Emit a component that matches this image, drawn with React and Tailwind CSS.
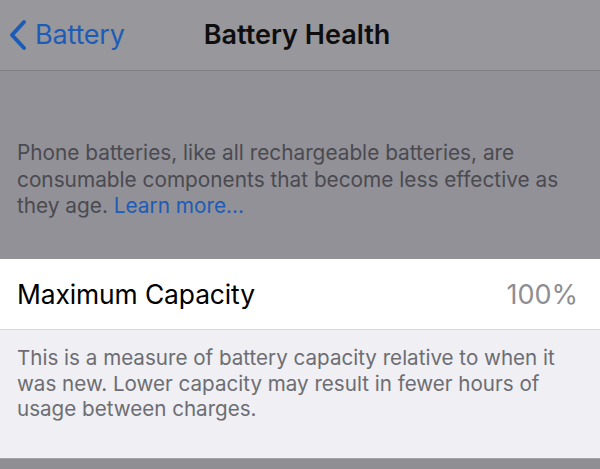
export default function App() {
  return (
    <div className="w-[600px] h-[469px] overflow-hidden flex flex-col bg-[#8e8e93]" style={{ fontFamily: 'Inter, "Noto Sans", sans-serif' }}>
      <div className="h-[71px] shrink-0 flex items-center relative bg-[#98979c] border-b border-[#807f84]">
        <div className="flex items-center pl-[8px] text-[#1d5cb6]">
          <svg width="20" height="32" viewBox="0 0 20 32" fill="none">
            <path d="M16 3 L4 16 L16 29" stroke="currentColor" strokeWidth="4" strokeLinecap="round" strokeLinejoin="round" />
          </svg>
          <span className="text-[27px] ml-[7px] tracking-[-0.2px]">Battery</span>
        </div>
        <div className="absolute left-0 right-0 text-center pr-[6px] text-[27px] font-semibold text-[#0e0e0f] pointer-events-none">
          Battery Health
        </div>
      </div>
      <div className="h-[188px] shrink-0 bg-[#929197] px-[17px] pt-[69px] text-[20.8px] leading-[26.5px] text-[#4a4a50]">
        Phone batteries, like all rechargeable batteries, are consumable components that become less effective as they age. <span className="text-[#1d5cb6]">Learn more...</span>
      </div>
      <div className="h-[71px] shrink-0 bg-white border-b border-[#d8d8dc] flex items-center justify-between pl-[17px] pr-[22px] pt-[2px]">
        <span className="text-[26.4px] text-black tracking-[-0.1px]">Maximum Capacity</span>
        <span className="text-[27px] text-[#8e8e93]">100%</span>
      </div>
      <div className="h-[129px] shrink-0 bg-[#efeff4] px-[17px] pt-[15px] text-[20.6px] leading-[25.7px] text-[#6d6d72] border-b border-[#a4a4a8]">
        This is a measure of battery capacity relative to when it was new. Lower capacity may result in fewer hours of usage between charges.
      </div>
      <div className="flex-1 bg-[#8e8e93]" />
    </div>
  );
}
